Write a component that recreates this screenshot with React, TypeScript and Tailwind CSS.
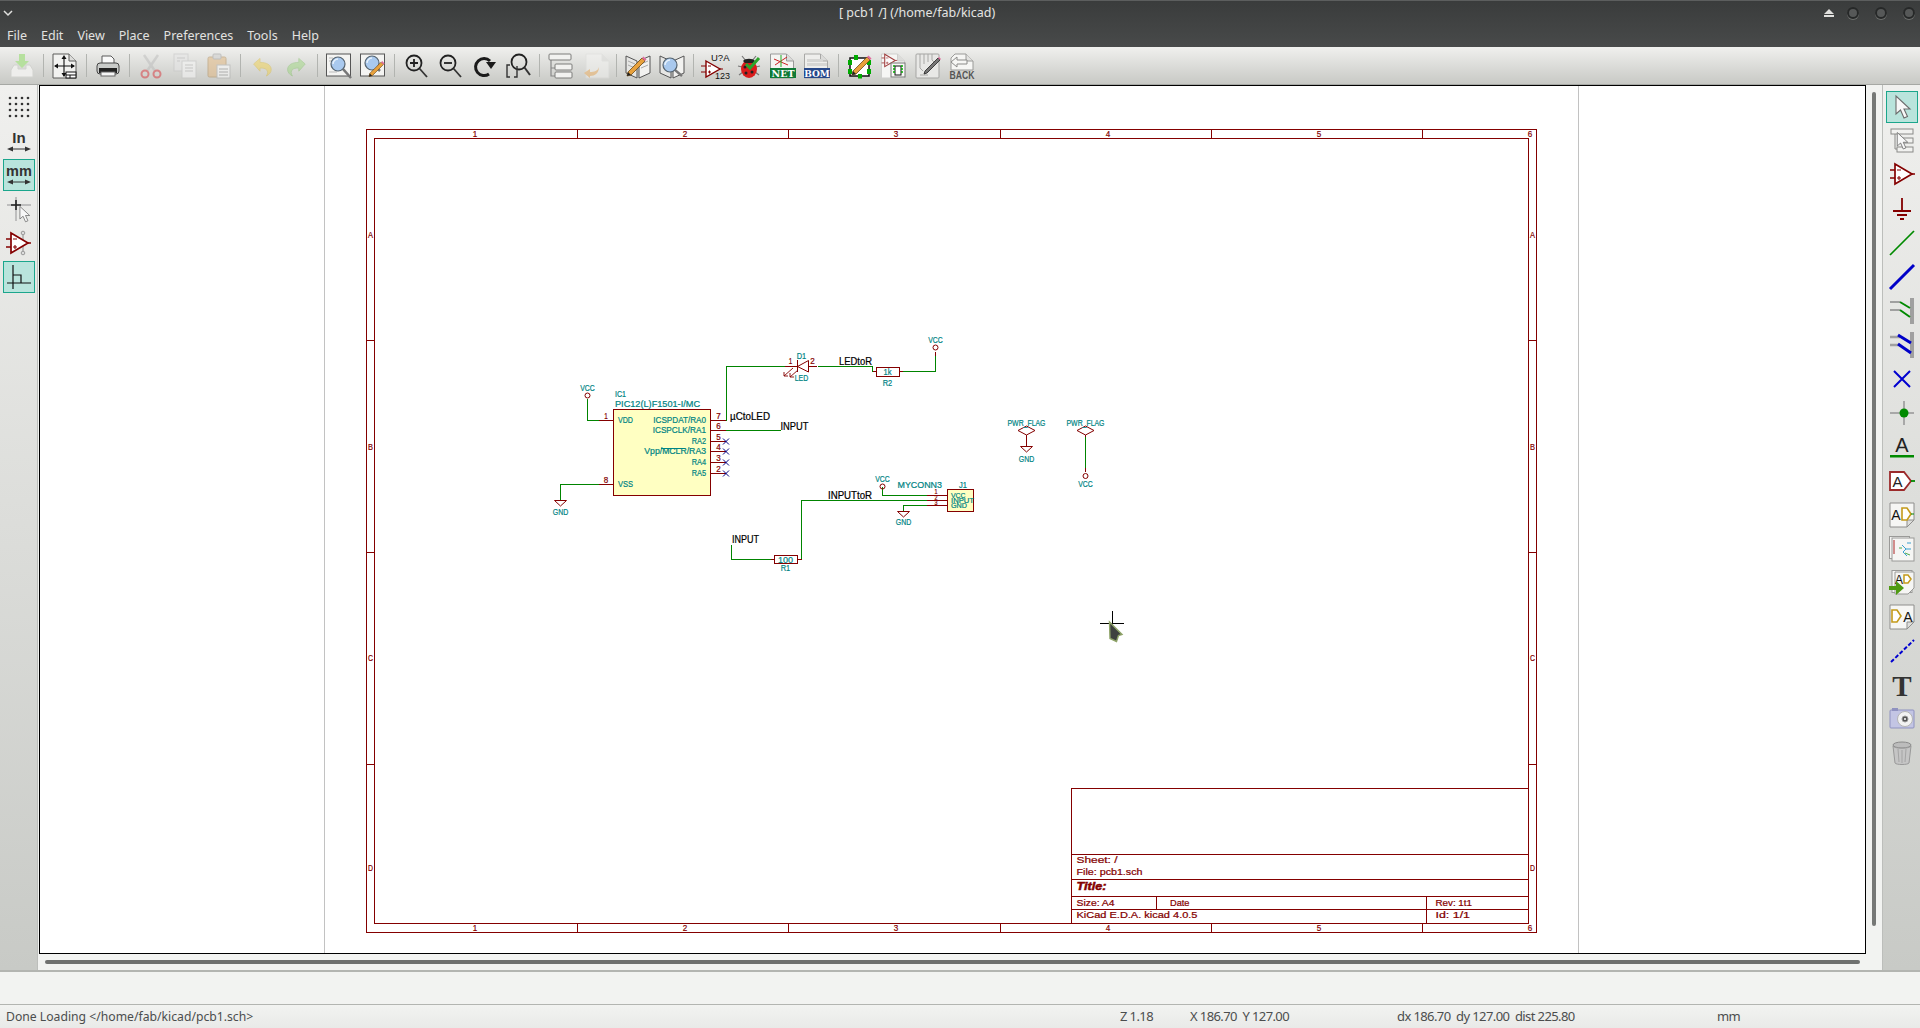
import type { ReactNode } from "react";

const MAROON = "#840000";
const GREEN = "#008400";
const TEAL = "#008484";
const NAVY = "#000084";

function Ico({ children, op = 1 }: { children: ReactNode; op?: number }) {
  return (
    <svg viewBox="0 0 26 26" width={26} height={26} opacity={op} className="overflow-visible">
      {children}
    </svg>
  );
}

function Pencil({ dx = 0, dy = 0, s = 1 }: { dx?: number; dy?: number; s?: number }) {
  return (
    <g transform={`translate(${dx} ${dy}) scale(${s})`}>
      <path d="M20 4l3 3L9 21l-4 1 1-4z" fill="#e8a13c" stroke="#6b4a1a" strokeWidth="0.8" />
      <path d="M5 22l1-4 3 3z" fill="#222" />
      <path d="M20 4l3 3 1.500-1.500-3-3z" fill="#e06a9c" />
    </g>
  );
}

function Lens({ cx, cy, r = 7, to = 24 }: { cx: number; cy: number; r?: number; to?: number }) {
  return (
    <g>
      <line x1={cx + r * 0.7} y1={cy + r * 0.7} x2={to} y2={to} stroke="#777" strokeWidth="2.500" />
      <circle cx={cx} cy={cy} r={r} fill="#a9c9ee" stroke="#55636f" strokeWidth="1.200" />
      <path d={`M${cx - r + 2} ${cy}a${r - 2} ${r - 2} 0 0 1 ${r - 2} ${-r + 2}`} fill="none" stroke="#e8f2fc" strokeWidth="1.400" />
    </g>
  );
}

function Opamp({ dx = 0, dy = 0, s = 1 }: { dx?: number; dy?: number; s?: number }) {
  return (
    <g transform={`translate(${dx} ${dy}) scale(${s})`} fill="none" stroke={MAROON}>
      <path d="M6 2L23 12 6 22z" strokeWidth="1.700" fill="#fff" />
      <path d="M1 8h5M1 16h5M23 12h3" strokeWidth="1.400" />
      <path d="M8 8h4M8 16h4M10 14v4" strokeWidth="1.100" />
    </g>
  );
}

function Page({ fill = "#f6f6f4", stroke = "#8a8a88", x = 1 }: { fill?: string; stroke?: string; x?: number }) {
  return (
    <g>
      <path d={`M${x} 1h16l7 7v17H${x}z`} fill={fill} stroke={stroke} />
      <path d={`M${x + 16} 1v7h7`} fill="#dcdcda" stroke={stroke} />
    </g>
  );
}

const topIcons: Record<string, ReactNode> = {
  tray: (
    <Ico>
      <path d="M5 12L2 17v7h22v-7l-3-5h-4v4H9v-4z" fill="#eeeeec" stroke="#d2d3cf" />
      <path d="M10 1h6v7h4l-7 7-7-7h4z" fill="#b6e09e" />
    </Ico>
  ),
  page: (
    <Ico>
      <Page fill="#f2f2f0" stroke="#5d5d5b" />
      <g stroke="#111" strokeWidth="1.100" fill="#111">
        <path d="M12 4v19M3 13h19" />
        <path d="M12 2l-2.500 4h5zM12 24l-2.500-4h5zM2 13l4-2.500v5zM23 13l-4-2.500v5z" stroke="none" />
      </g>
      <rect x="14" y="19" width="10" height="6" fill="#fff" stroke="#111" />
      <path d="M14 22h10M18 22v3" stroke="#111" />
    </Ico>
  ),
  print: (
    <Ico>
      <path d="M7 3h9l3 3v6H7z" fill="#fafafa" stroke="#5a5a5a" />
      <rect x="2" y="10" width="22" height="11" rx="3" fill="#c9cbc9" stroke="#444" />
      <rect x="4" y="15" width="18" height="5" fill="#222" />
      <rect x="6" y="19" width="14" height="4" fill="#f5f5f5" stroke="#666" />
    </Ico>
  ),
  cut: (
    <Ico op={0.45}>
      <path d="M6 2l11 16M20 2L9 18" stroke="#b7b7b7" strokeWidth="2.500" />
      <circle cx="7" cy="21" r="3.500" fill="none" stroke="#d9222a" strokeWidth="2" />
      <circle cx="19" cy="21" r="3.500" fill="none" stroke="#d9222a" strokeWidth="2" />
    </Ico>
  ),
  copy: (
    <Ico op={0.55}>
      <rect x="2" y="1" width="14" height="17" fill="#e6e6e6" stroke="#c4c4c4" />
      <rect x="10" y="8" width="14" height="17" fill="#f8f8f8" stroke="#c4c4c4" />
      <path d="M5 5h8M5 8h3M13 12h8M13 15h8M13 18h8" stroke="#b5b5b5" />
    </Ico>
  ),
  paste: (
    <Ico op={0.5}>
      <rect x="2" y="4" width="18" height="20" rx="1.500" fill="#e2b67c" stroke="#b08a55" />
      <rect x="7" y="1" width="8" height="5" rx="1" fill="#ccc" stroke="#999" />
      <rect x="11" y="12" width="13" height="13" fill="#fff" stroke="#aaa" />
      <path d="M13 16h9M13 19h9M13 22h9" stroke="#888" />
    </Ico>
  ),
  undo: (
    <Ico op={0.45}>
      <path
        transform="translate(3 3) scale(.8)"
        d="M2 10l8-7v5c8 0 14 3 14 9 0 3-2 6-6 8 2-3 2-6 0-8-1.500-1.500-4-2-8-2v4z"
        fill="#f4d03f"
        stroke="#d9b82c"
      />
    </Ico>
  ),
  redo: (
    <Ico op={0.4}>
      <path
        transform="translate(3 3) scale(.8)"
        d="M24 10l-8-7v5C8 8 2 11 2 17c0 3 2 6 6 8-2-3-2-6 0-8 1.500-1.500 4-2 8-2v4z"
        fill="#8fd66a"
        stroke="#6cb84a"
      />
    </Ico>
  ),
  zoomPage: (
    <Ico>
      <rect x="0.500" y="1" width="24" height="22" fill="#f4f4f2" stroke="#555" />
      <path d="M3 5h4M3 8h3M3 19h8" stroke="#bbb" />
      <Lens cx={12} cy={11} to={25} />
    </Ico>
  ),
  zoomEdit: (
    <Ico>
      <rect x="0.500" y="1" width="24" height="22" fill="#f4f4f2" stroke="#555" />
      <Lens cx={12} cy={10} r={7} to={10} />
      <line x1="17" y1="15" x2="20" y2="18" stroke="#777" strokeWidth="2.500" />
      <Pencil dx={5} dy={6} s={0.8} />
    </Ico>
  ),
  zoomIn: (
    <Ico>
      <circle cx="11" cy="10" r="7.500" fill="none" stroke="#222" strokeWidth="1.800" />
      <path d="M7 10h8M11 6v8" stroke="#222" strokeWidth="1.800" />
      <path d="M16.500 15.500L24 24" stroke="#333" strokeWidth="1.800" />
    </Ico>
  ),
  zoomOut: (
    <Ico>
      <circle cx="11" cy="10" r="7.500" fill="none" stroke="#222" strokeWidth="1.800" />
      <path d="M7 10h8" stroke="#222" strokeWidth="1.800" />
      <path d="M16.500 15.500L24 24" stroke="#333" strokeWidth="1.800" />
    </Ico>
  ),
  refresh: (
    <Ico>
      <path d="M18 21A8.500 8.500 0 1 1 19 8" fill="none" stroke="#1a1a1a" strokeWidth="3" />
      <path d="M15 9h10l-5 7z" fill="#1a1a1a" />
    </Ico>
  ),
  zoomSel: (
    <Ico>
      <circle cx="14" cy="9" r="7.500" fill="none" stroke="#222" strokeWidth="1.800" />
      <path d="M19.500 14.500L25 22" stroke="#333" strokeWidth="2" />
      <path d="M5 12H2v12h3M12 13v11h-3" fill="none" stroke="#333" strokeWidth="1.400" />
    </Ico>
  ),
  hier: (
    <Ico>
      <path d="M3 7v16h4M3 15h4" fill="none" stroke="#888" strokeWidth="1.200" />
      <rect x="1" y="1" width="22" height="6" rx="1" fill="#f2f2f0" stroke="#7d7d7b" />
      <rect x="7" y="11" width="17" height="6" rx="1" fill="#f2f2f0" stroke="#7d7d7b" />
      <rect x="7" y="19" width="17" height="6" rx="1" fill="#f2f2f0" stroke="#7d7d7b" />
    </Ico>
  ),
  importSheet: (
    <Ico op={0.5}>
      <Page fill="#f4f4f2" stroke="#dededc" x={4} />
      <path d="M2 20l6-4v3c4 0 8-1 9-5 0 6-4 9-9 9v2z" fill="#f0b060" />
    </Ico>
  ),
  libEdit: (
    <Ico>
      <path d="M1 3l11 5v17L1 20z" fill="#e6e6e4" stroke="#555" />
      <path d="M25 3L14 8v17l11-5z" fill="#f2f2f0" stroke="#555" />
      <path d="M3 8l7 3M3 12l7 3M16 11l7-3M16 15l7-3" stroke="#aaa" />
      <Pencil dx={-3} dy={1} />
    </Ico>
  ),
  libView: (
    <Ico>
      <path d="M1 3l11 5v17L1 20z" fill="#e6e6e4" stroke="#555" />
      <path d="M25 3L14 8v17l11-5z" fill="#f2f2f0" stroke="#555" />
      <Lens cx={11} cy={12} r={7} to={23} />
    </Ico>
  ),
  annotate: (
    <svg viewBox="0 0 28 26" width={28} height={26} className="overflow-visible">
      <g transform="translate(0 7)" fill="none" stroke={MAROON}>
        <path d="M5 1L19 9 5 17z" strokeWidth="1.400" fill="#fff" />
        <path d="M0 6h5M0 12h5M19 9h3" strokeWidth="1.200" />
        <path d="M7 6h3M7 12h3M8.500 10.500v3" />
      </g>
      <text x="10" y="8" fontSize="9.500" fill="#111" fontFamily="Liberation Sans, sans-serif">U?A</text>
      <text x="14" y="26" fontSize="9" fill="#111" fontFamily="Liberation Sans, sans-serif">123</text>
    </svg>
  ),
  erc: (
    <Ico>
      <path d="M6 3l4 5M20 3l-4 5M2 13l4 1M24 13l-4 1M3 22l4-3M23 22l-4-3" stroke="#777" strokeWidth="1.200" />
      <ellipse cx="13" cy="16" rx="8" ry="9" fill="#d91c1c" />
      <path d="M7 8c2-3 10-3 12 0l-2 2H9z" fill="#222" />
      <circle cx="9" cy="14" r="1.500" fill="#222" />
      <circle cx="16" cy="19" r="1.500" fill="#222" />
      <circle cx="10" cy="20" r="1.500" fill="#222" />
      <path d="M10 11l4 4 9-10" fill="none" stroke="#2aa52a" strokeWidth="3" />
    </Ico>
  ),
  net: (
    <Ico>
      <Page fill="#f4f4f2" stroke="#999" x={0.5} />
      <path d="M5 12L17 4M4 6l14 6" stroke="#c22" />
      <path d="M11 2v12" stroke="#2a2" />
      <rect x="0" y="15" width="26" height="10" fill="#0f7a36" />
      <text x="13" y="23.500" textAnchor="middle" fontSize="9.500" fontWeight="700" fill="#fff" fontFamily="DejaVu Serif, serif">NET</text>
    </Ico>
  ),
  bom: (
    <Ico>
      <Page fill="#eeeeec" stroke="#a8a8a6" x={0.5} />
      <rect x="3" y="6" width="16" height="3" fill="#d6d6d4" />
      <rect x="3" y="10" width="20" height="3" fill="#d6d6d4" />
      <rect x="0" y="15" width="26" height="10" fill="#27488a" />
      <text x="13" y="23.500" textAnchor="middle" fontSize="9" fontWeight="700" fill="#fff" fontFamily="DejaVu Serif, serif">BOM</text>
    </Ico>
  ),
  cvpcb: (
    <Ico>
      <rect x="3" y="5" width="19" height="18" fill="#fff" stroke="#111" strokeWidth="1.500" />
      <rect x="1" y="7" width="4" height="5" fill="#0a0" />
      <rect x="1" y="16" width="4" height="5" fill="#0a0" />
      <rect x="20" y="7" width="4" height="5" fill="#0a0" />
      <rect x="20" y="16" width="4" height="5" fill="#0a0" />
      <rect x="7" y="2" width="4" height="5" fill="#0a0" />
      <rect x="11" y="21" width="4" height="4.500" fill="#0a0" />
      <Pencil />
    </Ico>
  ),
  footprint: (
    <Ico>
      <Page fill="#f6f6f4" stroke="#cfcfcd" x={0.5} />
      <g opacity="0.75">
        <Opamp s={0.62} />
      </g>
      <rect x="10" y="10" width="14" height="14" fill="#f8f8f6" stroke="#777" />
      <rect x="14" y="13" width="6" height="9" fill="#fff" stroke="#111" />
      <path d="M12 13h2M12 16h2M12 19h2M20 13h2M20 16h2M20 19h2" stroke="#0a0" strokeWidth="1.500" />
    </Ico>
  ),
  pcbEdit: (
    <Ico>
      <rect x="1" y="1" width="23" height="24" rx="1" fill="#e8e8e6" stroke="#a5a5a3" />
      <path d="M5 1v14l3 3M9 1v10M13 1v8M17 1v6l3 3M5 22h8" fill="none" stroke="#a8a8a6" />
      <path d="M23 5l2 2L12 20l-3 1 1-3z" fill="#777" stroke="#222" strokeWidth="0.800" />
      <path d="M23 5l2 2 1-1-2-2z" fill="#e06a9c" />
    </Ico>
  ),
  back: (
    <Ico>
      <path d="M6 1h11l7 7v9H2V5z" fill="#f6f6f4" stroke="#9a9a98" />
      <path d="M17 1v7h7" fill="#e2e2e0" stroke="#9a9a98" />
      <path d="M2 9l6-5v3h10v4H8v3z" fill="#f6f6f4" stroke="#8b8b89" />
      <text x="13" y="26" textAnchor="middle" fontSize="10.500" fontWeight="700" fill="#555" textLength="25" lengthAdjust="spacingAndGlyphs" fontFamily="Liberation Sans, sans-serif">BACK</text>
    </Ico>
  ),
};

// null = separator
const topBar: (string | null)[] = [
  "tray", null, "page", null, "print", null, "cut", "copy", "paste", null, "undo", "redo", null,
  "zoomPage", "zoomEdit", null, "zoomIn", "zoomOut", "refresh", "zoomSel", null, "hier", "importSheet", null,
  "libEdit", "libView", null, "annotate", "erc", "net", "bom", null, "cvpcb", "footprint", "pcbEdit", "back",
];

const CursorGlyph = ({ dx = 0, dy = 0, s = 1 }: { dx?: number; dy?: number; s?: number }) => (
  <path
    transform={`translate(${dx} ${dy}) scale(${s})`}
    d="M7 2v18l4.500-4 3.500 8 3.500-1.500-3.500-7.500H21z"
    fill="#f8f8f8"
    stroke="#6c6c6c"
    strokeWidth="1.100"
  />
);

const DogEar = ({ children }: { children: ReactNode }) => (
  <Ico>
    <path d="M1 1h24v17l-7 7H1z" fill="#f6f6f4" stroke="#8e8e8c" />
    <path d="M25 18h-7v7z" fill="#dededc" stroke="#8e8e8c" />
    {children}
  </Ico>
);

const rightIcons: ReactNode[] = [
  <Ico>
    <CursorGlyph />
  </Ico>,
  <Ico>
    <rect x="2" y="1" width="22" height="5" fill="#f2f2f0" stroke="#8a8a88" />
    <rect x="10" y="10" width="14" height="5" fill="#f2f2f0" stroke="#8a8a88" />
    <rect x="8" y="19" width="16" height="5" fill="#f2f2f0" stroke="#8a8a88" />
    <path d="M6 6v15h2" fill="none" stroke="#8a8a88" />
    <CursorGlyph dx={3} dy={3} s={0.75} />
  </Ico>,
  <Ico>
    <Opamp />
  </Ico>,
  <Ico>
    <path d="M13 2v13M4 15h18M8 19h10M11 23h4" stroke="#840000" strokeWidth="1.800" />
  </Ico>,
  <Ico>
    <path d="M1 25L25 1" stroke="#008a00" strokeWidth="1.700" />
  </Ico>,
  <Ico>
    <path d="M1 25L25 1" stroke="#0000c8" strokeWidth="3" />
  </Ico>,
  <Ico>
    <path d="M1 4h10M1 12h10" stroke="#a0a0a0" strokeWidth="2" />
    <rect x="21" y="0" width="4" height="26" fill="#a0a0a0" />
    <path d="M11 4l10 6M11 12l10 7" stroke="#008a00" strokeWidth="2" />
  </Ico>,
  <Ico>
    <path d="M1 5h10M1 13h10" stroke="#a0a0a0" strokeWidth="2.500" />
    <rect x="21" y="0" width="4" height="26" fill="#a0a0a0" />
    <path d="M9 3l13 8M9 12l13 9" stroke="#0000c8" strokeWidth="3" />
  </Ico>,
  <Ico>
    <path d="M5 5l16 16M21 5L5 21" stroke="#0000d0" strokeWidth="2" />
  </Ico>,
  <Ico>
    <path d="M1 13h24M15 1v24" stroke="#a8a8a8" strokeWidth="2" />
    <circle cx="15" cy="13" r="4.500" fill="#008a00" />
  </Ico>,
  <Ico>
    <text x="13" y="18" textAnchor="middle" fontSize="20" fill="#222" fontFamily="Liberation Sans, sans-serif">A</text>
    <rect x="1" y="21" width="24" height="2.500" fill="#008a00" />
  </Ico>,
  <Ico>
    <path d="M1 4h14l7 9-7 9H1z" fill="#fff" stroke="#9c2a2a" strokeWidth="1.800" />
    <path d="M22 13h4" stroke="#008a00" strokeWidth="1.800" />
    <text x="8.500" y="19" textAnchor="middle" fontSize="15" fill="#222" fontFamily="Liberation Sans, sans-serif">A</text>
  </Ico>,
  <DogEar>
    <text x="7" y="18" textAnchor="middle" fontSize="14" fill="#111" fontFamily="Liberation Sans, sans-serif">A</text>
    <path d="M13 6h5l4 6-4 6h-5z" fill="#fff" stroke="#c49a1a" strokeWidth="1.600" />
    <path d="M22 12h3" stroke="#008a00" />
  </DogEar>,
  <Ico>
    <rect x="0.500" y="0.500" width="20" height="22" fill="#f6f6f4" stroke="#9a9a98" />
    <rect x="3" y="2" width="22" height="23" fill="#f6f6f4" stroke="#9a9a98" />
    <path d="M5 4v14" stroke="#c46a6a" strokeWidth="1.500" />
    <path d="M13 9l4 4-3 3 4 4M17 13h5M18 7h4" fill="none" stroke="#3aa0d0" />
    <path d="M16 17l5 2M10 12h3" stroke="#4aaa4a" />
  </Ico>,
  <Ico>
    <rect x="3" y="0.500" width="20" height="22" fill="#f6f6f4" stroke="#9a9a98" />
    <path d="M6 2h19v16l-6 6H6z" fill="#f6f6f4" stroke="#9a9a98" />
    <text x="10" y="14" textAnchor="middle" fontSize="12" fill="#111" fontFamily="Liberation Sans, sans-serif">A</text>
    <path d="M15 5h4l3 4-3 4h-4z" fill="#fff" stroke="#c49a1a" strokeWidth="1.500" />
    <path d="M0 18h7v-5l8 7-8 7v-5H0z" fill="#4f9a12" transform="translate(0 -2)" />
  </Ico>,
  <DogEar>
    <path d="M3 6h5l4 6-4 6H3z" fill="#fff" stroke="#c49a1a" strokeWidth="1.600" />
    <text x="19" y="18" textAnchor="middle" fontSize="14" fill="#111" fontFamily="Liberation Sans, sans-serif">A</text>
  </DogEar>,
  <Ico>
    <path d="M2 24L25 2" stroke="#0000d0" strokeWidth="2" strokeDasharray="4 2" />
  </Ico>,
  <Ico>
    <text x="13" y="24" textAnchor="middle" fontSize="29" fontWeight="700" fill="#333" fontFamily="Liberation Serif, serif">T</text>
  </Ico>,
  <Ico>
    <rect x="1" y="4" width="24" height="18" rx="1" fill="#c3c5e4" stroke="#8f92c0" />
    <rect x="3" y="2" width="6" height="3" fill="#8f92c0" />
    <circle cx="16" cy="13" r="7.500" fill="#f2f2f2" stroke="#b5b5b5" />
    <circle cx="16" cy="13" r="3" fill="#555" stroke="#999" />
    <circle cx="16" cy="13" r="1" fill="#fff" />
  </Ico>,
  <Ico>
    <ellipse cx="13" cy="5" rx="9" ry="3" fill="#bcbcbc" stroke="#8a8a8a" />
    <path d="M4 6l2 17c1 2 13 2 14 0l2-17c-2 3-16 3-18 0z" fill="#c5c5c5" stroke="#999" />
    <path d="M9 9l1 13M13 10v13M17 9l-1 13" stroke="#a5a5a5" />
  </Ico>,
];

const leftIcons: { icon: ReactNode; active?: boolean }[] = [
  {
    icon: (
      <Ico>
        <g fill="#333">
          {[4, 10, 16, 22].map((y) =>
            [4, 10, 16, 22].map((x) => <circle key={`${x}-${y}`} cx={x} cy={y} r="1.300" />)
          )}
        </g>
      </Ico>
    ),
  },
  {
    icon: (
      <Ico>
        <text x="13" y="15" textAnchor="middle" fontSize="15" fontWeight="700" fill="#333" fontFamily="Liberation Sans, sans-serif">In</text>
        <path d="M4 21h18" stroke="#333" />
        <path d="M1 21l6-2.500v5zM25 21l-6-2.500v5z" fill="#333" />
      </Ico>
    ),
  },
  {
    active: true,
    icon: (
      <Ico>
        <text x="13" y="14" textAnchor="middle" fontSize="14.500" fontWeight="700" fill="#333" fontFamily="Liberation Sans, sans-serif">mm</text>
        <path d="M4 20h18" stroke="#333" />
        <path d="M1 20l6-2.500v5zM25 20l-6-2.500v5z" fill="#333" />
      </Ico>
    ),
  },
  {
    icon: (
      <Ico>
        <path d="M1 9h24M10 1v24" stroke="#b0b0b0" strokeWidth="1.500" />
        <path d="M5 9h10M10 4v10" stroke="#222" strokeWidth="1.600" />
        <CursorGlyph dx={9} dy={9} s={0.7} />
      </Ico>
    ),
  },
  {
    icon: (
      <Ico>
        <path d="M17 3v20" stroke="#aaa" strokeWidth="1.500" />
        <circle cx="17" cy="3" r="1.800" fill="#ddd" stroke="#999" />
        <circle cx="17" cy="23" r="1.800" fill="#ddd" stroke="#999" />
        <Opamp dx={-1} dy={1} />
      </Ico>
    ),
  },
  {
    active: true,
    icon: (
      <Ico>
        <path d="M7 1v24M1 19h24" stroke="#111" strokeWidth="1.200" />
        <path d="M7 11h8v8" fill="none" stroke="#111" strokeWidth="1.200" />
      </Ico>
    ),
  },
];

function SideButton({ children, active }: { children: ReactNode; active?: boolean }) {
  return (
    <div
      className={
        active
          ? "w-8 h-8 mb-[2px] flex items-center justify-center border border-[#1ba68c] bg-[#b9e4dc]"
          : "w-8 h-8 mb-[2px] flex items-center justify-center"
      }
    >
      {children}
    </div>
  );
}

function T({
  x,
  y,
  w,
  c = TEAL,
  a = "start",
  s = 9,
  bold,
  children,
}: {
  x: number;
  y: number;
  w: number;
  c?: string;
  a?: "start" | "middle" | "end";
  s?: number;
  bold?: boolean;
  children: ReactNode;
}) {
  return (
    <text
      x={x}
      y={y + s * 0.36}
      fill={c}
      stroke={c}
      strokeWidth={bold ? 0.5 : 0.22}
      fontSize={s}
      textAnchor={a}
      textLength={w}
      lengthAdjust="spacingAndGlyphs"
      fontWeight={bold ? 700 : 400}
      fontStyle={bold ? "italic" : "normal"}
      fontFamily="'Liberation Sans', sans-serif"
    >
      {children}
    </text>
  );
}

function Power({ x, y, labelY }: { x: number; y: number; labelY: number }) {
  return (
    <g>
      <circle cx={x} cy={y} r="2.500" fill="none" stroke={MAROON} />
      <T x={x} y={labelY} w={14.5} a="middle">VCC</T>
    </g>
  );
}

function Gnd({ x, y, labelY }: { x: number; y: number; labelY: number }) {
  return (
    <g>
      <path d={`M${x - 6} ${y}h12l-6 5.500z`} fill="none" stroke={MAROON} />
      <T x={x} y={labelY} w={15.5} a="middle">GND</T>
    </g>
  );
}

function NoConn({ x, y }: { x: number; y: number }) {
  return <path d={`M${x - 3} ${y - 3}l6 6m0 -6l-6 6`} stroke={NAVY} fill="none" />;
}

function Schematic() {
  const tickX = [577, 788, 1000, 1211, 1422];
  const tickY = [340, 552, 764];
  const hLabels = [
    ["1", 475],
    ["2", 685],
    ["3", 896],
    ["4", 1108],
    ["5", 1319],
    ["6", 1530],
  ] as const;
  const vLabels = [
    ["A", 235],
    ["B", 447],
    ["C", 658],
    ["D", 868],
  ] as const;
  const rightPins = [
    { y: 420, n: "7", name: "ICSPDAT/RA0", w: 52.7 },
    { y: 430, n: "6", name: "ICSPCLK/RA1", w: 53.3 },
    { y: 441, n: "5", name: "RA2", w: 14.3 },
    { y: 451, n: "4", name: "Vpp/MCLR/RA3", w: 61.7 },
    { y: 462, n: "3", name: "RA4", w: 14.3 },
    { y: 473, n: "2", name: "RA5", w: 14.3 },
  ];
  return (
    <svg viewBox="40 86 1825 867" className="block w-full h-full">
      <path d="M324.500 86V953M1578.500 86V953" stroke="#c2c2c2" shapeRendering="crispEdges" />

      {/* Page frame */}
      <g transform="translate(.5 .5)" stroke={MAROON} fill="none" shapeRendering="crispEdges">
        <rect x="366" y="129" width="1170" height="803" />
        <rect x="374" y="138" width="1154" height="785" />
        {tickX.map((x) => (
          <path key={x} d={`M${x} 129v9M${x} 923v9`} />
        ))}
        {tickY.map((y) => (
          <path key={y} d={`M366 ${y}h8M1528 ${y}h8`} />
        ))}
        <path d="M1071 923V788H1528M1071 854H1528M1071 879H1528M1071 896H1528M1071 909H1528M1156 896v13M1426 896v27" />
      </g>
      {hLabels.map(([t, x]) => (
        <g key={t}>
          <T x={x} y={134} w={4.5} a="middle" c={MAROON}>{t}</T>
          <T x={x} y={928} w={4.5} a="middle" c={MAROON}>{t}</T>
        </g>
      ))}
      {vLabels.map(([t, y]) => (
        <g key={t}>
          <T x={370.5} y={y} w={5} a="middle" c={MAROON}>{t}</T>
          <T x={1532.5} y={y} w={5} a="middle" c={MAROON}>{t}</T>
        </g>
      ))}

      {/* Title block */}
      <T x={1076.500} y={860} w={41} c={MAROON}>Sheet: /</T>
      <T x={1076.500} y={871.500} w={66} c={MAROON}>File: pcb1.sch</T>
      <T x={1076.500} y={886.500} w={30} c={MAROON} s={11} bold>Title:</T>
      <T x={1076.500} y={902.500} w={38} c={MAROON}>Size: A4</T>
      <T x={1170} y={902.500} w={19.500} c={MAROON}>Date</T>
      <T x={1435.500} y={902.500} w={36.500} c={MAROON}>Rev: 1t1</T>
      <T x={1076.500} y={914.500} w={121} c={MAROON}>KiCad E.D.A.  kicad 4.0.5</T>
      <T x={1435.500} y={914.500} w={34.500} c={MAROON}>Id: 1/1</T>

      {/* IC1 */}
      <g transform="translate(.5 .5)" shapeRendering="crispEdges">
        <rect x="613" y="409" width="97" height="86" fill="#ffffc2" stroke={MAROON} strokeWidth="1.300" />
        <path d="M598 420h15M598 484h15" stroke={MAROON} />
        {rightPins.map((p) => (
          <path key={p.n} d={`M710 ${p.y}h15`} stroke={MAROON} />
        ))}
        <path
          fill="none"
          stroke={GREEN}
          d="M587 398v22h11M598 484h-38v16M725 420h1v-54h59M725 430h55M817 366h55v5h4M902 371h33v-16M926 495h-44v-9M926 500H801v59M771 559h-40v-15M926 505h-23v6"
        />
        <path d="M872 371h4M898 371h4M935 355v-4M926 495h21M926 500h21M926 505h21M797 559h4M770 559h4" stroke={MAROON} />
        <rect x="876" y="367" width="23" height="9" fill="#fff" stroke={MAROON} />
        <rect x="774" y="555" width="23" height="8" fill="#fff" stroke={MAROON} />
        <rect x="947" y="489" width="26" height="22" fill="#ffffc2" stroke={MAROON} />
      </g>
      <T x={615} y={393.500} w={11}>IC1</T>
      <T x={615} y={404} w={85}>PIC12(L)F1501-I/MC</T>
      <T x={618} y={420} w={15}>VDD</T>
      <T x={618} y={484} w={15}>VSS</T>
      <T x={606} y={416} w={3.500} c={MAROON} a="middle">1</T>
      <T x={606} y={480} w={4.500} c={MAROON} a="middle">8</T>
      {rightPins.map((p) => (
        <g key={p.n}>
          <T x={706} y={p.y} w={p.w} a="end">{p.name}</T>
          <T x={718.500} y={p.y - 4} w={4.500} c={MAROON} a="middle">{p.n}</T>
        </g>
      ))}
      <path d="M661 448.500h24.500" stroke={TEAL} />
      {[441, 451, 462, 473].map((y) => (
        <NoConn key={y} x={726} y={y + 0.5} />
      ))}
      <Power x={587.500} y={395.500} labelY={388} />
      <Gnd x={560.500} y={500.500} labelY={511.500} />

      {/* Net labels */}
      <T x={730} y={416} w={40} c="#000" s={10}>µCtoLED</T>
      <T x={780.500} y={426} w={28} c="#000" s={10}>INPUT</T>
      <T x={839} y={361.500} w={33} c="#000" s={10}>LEDtoR</T>
      <T x={828} y={495.500} w={44} c="#000" s={10}>INPUTtoR</T>
      <T x={732} y={539} w={27} c="#000" s={10}>INPUT</T>

      {/* D1 */}
      <g stroke={MAROON} fill="none">
        <path d="M785 366.500h32" />
        <path d="M797.500 360v12M797.500 366.500L808.500 360.500V372z" fill="#fff" />
        <path d="M793 368l-9 8m0-4v4h4M798 370l-8 7m0-4v4h4" strokeWidth="0.900" />
      </g>
      <T x={801.500} y={356} w={9.500} a="middle">D1</T>
      <T x={801.500} y={377.500} w={13.500} a="middle">LED</T>
      <T x={790.500} y={361} w={3.500} a="middle" c={MAROON}>1</T>
      <T x={812.500} y={361} w={4.500} a="middle" c={MAROON}>2</T>

      {/* R1, R2 */}
      <T x={887.500} y={371.500} w={8} a="middle">1k</T>
      <T x={887.500} y={382.500} w={9.500} a="middle">R2</T>
      <T x={785.500} y={559.500} w={15} a="middle">100</T>
      <T x={785.500} y={567.500} w={9.500} a="middle">R1</T>
      <Power x={935.500} y={347.500} labelY={340} />

      {/* J1 */}
      <T x={897.500} y={484.500} w={44.500}>MYCONN3</T>
      <T x={963} y={484.500} w={8} a="middle">J1</T>
      <T x={951} y={495} w={14.500} s={7.5}>VCC</T>
      <T x={951} y={500.500} w={23} s={7.5}>INPUT</T>
      <T x={951} y={505.500} w={16} s={7.5}>GND</T>
      <T x={936} y={491} w={3} s={7} c={MAROON} a="middle">1</T>
      <T x={936} y={497} w={3} s={7} c={MAROON} a="middle">2</T>
      <T x={936} y={502.500} w={3} s={7} c={MAROON} a="middle">3</T>
      <Power x={882.500} y={486.500} labelY={479} />
      <Gnd x={903.500} y={511.500} labelY={522} />

      {/* PWR_FLAG */}
      <path d="M1018 430.500l8.500-4.500 8.500 4.500-8.500 4.500z" fill="none" stroke={MAROON} />
      <path d="M1026.500 435v11" stroke={MAROON} />
      <T x={1026.500} y={422.500} w={38} a="middle">PWR_FLAG</T>
      <Gnd x={1026.500} y={446.500} labelY={458.500} />
      <path d="M1077 430.500l8.500-4.500 8.500 4.500-8.500 4.500z" fill="none" stroke={MAROON} />
      <T x={1085.500} y={422.500} w={38} a="middle">PWR_FLAG</T>
      <path d="M1085.500 435v2M1085.500 468v4" stroke={MAROON} />
      <path d="M1085.500 437v31" stroke={GREEN} />
      <Power x={1085.500} y={476} labelY={484} />

      {/* Crosshair and pointer */}
      <path d="M1100 623.500h24M1112.500 611v24" stroke="#000" shapeRendering="crispEdges" />
      <path d="M1109.500 622l12.500 12.500-3.500 1-2 6-6.500-3z" fill="#3f4140" stroke="#8fa468" strokeWidth="1.400" />
    </svg>
  );
}

export default function App() {
  return (
    <div className="w-[1920px] h-[1028px] flex flex-col overflow-hidden bg-[#f2f3f1] font-['Noto_Sans',sans-serif] text-[12.5px]">
      {/* Title bar and menus */}
      <div className="h-[47px] shrink-0 bg-gradient-to-b from-[#3a3c3c] to-[#484a4a] border-t border-[#5c5e5e] text-[#e2e2e0]">
        <div className="h-6 relative flex items-center">
          <svg width="10" height="7" viewBox="0 0 10 7" className="ml-[3px]">
            <path d="M1 1l4 4 4-4" fill="none" stroke="#e0e0de" strokeWidth="1.500" />
          </svg>
          <span className="ml-[826px] text-[#e4e4e2]">[ pcb1 /] (/home/fab/kicad)</span>
          <div className="ml-auto flex items-center mr-[5px] gap-4">
            <svg width="10" height="8" viewBox="0 0 10 8" className="-mr-[3px]">
              <path d="M5 0l5 5H0zM0 6h10v2H0z" fill="#e0e0de" />
            </svg>
            {[0, 1, 2].map((i) => (
              <div key={i} className="w-3 h-3 rounded-full bg-[#565858] border-2 border-[#262828] shadow-[0_1px_0_#6e706e]" />
            ))}
          </div>
        </div>
        <div className="h-[22px] flex items-center pl-[7px] gap-[14px]">
          {["File", "Edit", "View", "Place", "Preferences", "Tools", "Help"].map((m) => (
            <span key={m}>{m}</span>
          ))}
        </div>
      </div>

      {/* Main toolbar */}
      <div className="h-[38px] shrink-0 flex items-center pl-[5px] bg-gradient-to-b from-[#f0f0ee] to-[#c8c9c5] border-b border-[#a6a8a4]">
        {topBar.map((name, i) =>
          name === null ? (
            <div key={i} className="w-[9px] flex justify-center">
              <div className="w-px h-[23px] bg-[#b2b4b0]" />
            </div>
          ) : (
            <div key={i} className="w-[34px] h-[34px] flex items-center justify-center">
              {topIcons[name]}
            </div>
          )
        )}
      </div>

      <div className="flex-1 flex min-h-0">
        {/* Left tools */}
        <div className="w-[38px] shrink-0 pt-[6px] pl-[3px] bg-gradient-to-b from-[#f0f0ee] to-[#c8cac6] border-r border-[#bcbebb]">
          {leftIcons.map((b, i) => (
            <SideButton key={i} active={b.active}>
              {b.icon}
            </SideButton>
          ))}
        </div>

        {/* Canvas with scrollbars */}
        <div className="flex-1 flex flex-col min-w-0">
          <div className="h-[869px] flex">
            <div className="ml-px w-[1827px] h-full border border-black bg-white box-border overflow-hidden">
              <Schematic />
            </div>
            <div className="w-4 flex justify-center pt-[6px] bg-[#f2f3f1]">
              <div className="w-1 h-[834px] mt-px rounded-full bg-[#767876]" />
            </div>
          </div>
          <div className="h-4 flex items-center pl-[7px] bg-[#f2f3f1]">
            <div className="w-[1815px] h-1 rounded-full bg-[#6f716f]" />
          </div>
        </div>

        {/* Right tools */}
        <div className="w-[38px] shrink-0 pt-[6px] pl-[3px] bg-gradient-to-b from-[#f0f0ee] to-[#c8cac6] border-l border-[#bcbebb]">
          {rightIcons.map((icon, i) => (
            <SideButton key={i} active={i === 0}>
              {icon}
            </SideButton>
          ))}
        </div>
      </div>

      {/* Message panel */}
      <div className="h-[35px] shrink-0 bg-[#f2f3f1] border-t-2 border-b border-[#b3b5b1]" />

      {/* Status bar */}
      <div className="h-[23px] shrink-0 flex items-center pt-px text-[13px] text-[#4b4d4d] bg-gradient-to-b from-[#f2f3f1] to-[#e9eae8]">
        <span className="w-[1120px] pl-[6px] text-[12.2px]">Done Loading &lt;/home/fab/kicad/pcb1.sch&gt;</span>
        <span className="w-[70px] tracking-[-0.6px]">Z 1.18</span>
        <span className="w-[207px] tracking-[-0.6px]">X 186.70&nbsp; Y 127.00</span>
        <span className="w-[320px] tracking-[-0.6px]">dx 186.70&nbsp; dy 127.00&nbsp; dist 225.80</span>
        <span className="tracking-[-0.6px]">mm</span>
      </div>
    </div>
  );
}
